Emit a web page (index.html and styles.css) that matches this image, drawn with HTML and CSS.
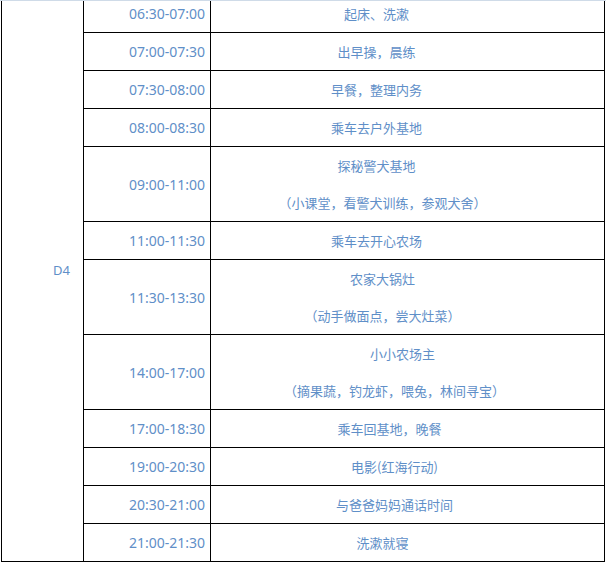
FILE: index.html
```html
<!DOCTYPE html>
<html lang="zh-CN">
<head>
<meta charset="utf-8">
<title>D4 日程</title>
<link rel="stylesheet" href="styles.css">
</head>
<body>
<div class="sheet">
  <table class="schedule">
    <colgroup>
      <col class="col-day">
      <col class="col-time">
      <col class="col-act">
    </colgroup>
    <tbody>
      <tr>
        <td class="day" rowspan="12">D4</td>
        <td class="time">06:30-07:00</td>
        <td class="act"><div class="ln c-a">起床、洗漱</div></td>
      </tr>
      <tr>
        <td class="time">07:00-07:30</td>
        <td class="act"><div class="ln c-a">出早操，晨练</div></td>
      </tr>
      <tr>
        <td class="time">07:30-08:00</td>
        <td class="act"><div class="ln c-a">早餐，整理内务</div></td>
      </tr>
      <tr>
        <td class="time">08:00-08:30</td>
        <td class="act"><div class="ln c-a">乘车去户外基地</div></td>
      </tr>
      <tr>
        <td class="time">09:00-11:00</td>
        <td class="act"><div class="ln c-a">探秘警犬基地</div><div class="ln c-b">（小课堂，看警犬训练，参观犬舍）</div></td>
      </tr>
      <tr>
        <td class="time">11:00-11:30</td>
        <td class="act"><div class="ln c-a">乘车去开心农场</div></td>
      </tr>
      <tr>
        <td class="time">11:30-13:30</td>
        <td class="act"><div class="ln c-b">农家大锅灶</div><div class="ln c-b">（动手做面点，尝大灶菜）</div></td>
      </tr>
      <tr>
        <td class="time">14:00-17:00</td>
        <td class="act"><div class="ln c-e">小小农场主</div><div class="ln c-c">（摘果蔬，钓龙虾，喂兔，林间寻宝）</div></td>
      </tr>
      <tr>
        <td class="time">17:00-18:30</td>
        <td class="act"><div class="ln c-d">乘车回基地，晚餐</div></td>
      </tr>
      <tr>
        <td class="time">19:00-20:30</td>
        <td class="act"><div class="ln c-c">电影(红海行动)</div></td>
      </tr>
      <tr>
        <td class="time">20:30-21:00</td>
        <td class="act"><div class="ln c-c">与爸爸妈妈通话时间</div></td>
      </tr>
      <tr>
        <td class="time">21:00-21:30</td>
        <td class="act"><div class="ln c-b">洗漱就寝</div></td>
      </tr>
    </tbody>
  </table>
</div>
</body>
</html>
```

FILE: styles.css
```css
html, body {
  margin: 0;
  padding: 0;
  background: #ffffff;
}

body {
  font-family: "Noto Sans", "Noto Sans CJK SC", sans-serif;
  color: #5f8fc8;
}

.sheet {
  width: 606px;
  height: 562px;
  border-top: 1px solid #cfdbe8;
  overflow: hidden;
}

.schedule {
  margin: -6px 0 0 1px;
  width: 604px;
  table-layout: fixed;
  border-collapse: separate;
  border-spacing: 0;
  border-left: 1px solid #000;
}

.col-day { width: 82px; }
.col-time { width: 127px; }
.col-act { width: 394px; }

.schedule td {
  padding: 0;
  border-right: 1px solid #000;
  border-bottom: 1px solid #000;
  line-height: 37px;
  font-size: 13px;
  vertical-align: middle;
  white-space: nowrap;
}

.day {
  text-align: center;
  padding: 0 0 15px 38px !important;
  font-size: 13px;
}

.time {
  text-align: right;
  padding-right: 5px !important;
  font-size: 14px !important;
}

.act {
  font-family: "Noto Sans CJK SC", sans-serif;
}

.ln {
  height: 37px;
  text-align: center;
}

.c-a { padding-right: 62px; }
.c-b { padding-right: 50px; }
.c-c { padding-right: 26px; }
.c-d { padding-right: 36px; }
.c-e { padding-right: 10px; }
```
